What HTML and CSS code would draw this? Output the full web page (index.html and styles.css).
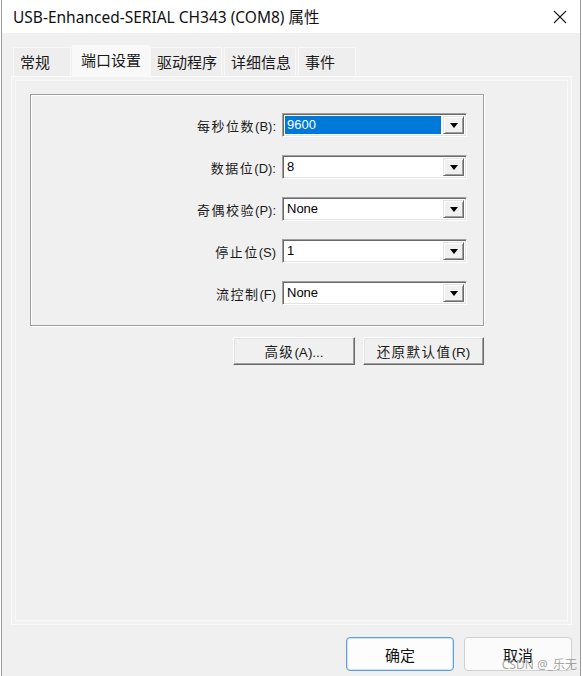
FILE: index.html
```html
<!DOCTYPE html>
<html>
<head>
  <meta charset="utf-8" />
  <title>USB-Enhanced-SERIAL CH343 (COM8) 属性</title>
  <link rel="stylesheet" href="styles.css">
</head>
<body>
  <div class="window">
    <div class="titlebar">
      <span class="title">USB-Enhanced-SERIAL CH343 (COM8) 属性</span>
      <svg class="close" width="14" height="14" viewBox="0 0 14 14">
        <path d="M1 1 L13 13 M13 1 L1 13" stroke="#1a1a1a" stroke-width="1.1" fill="none" />
      </svg>
    </div>
    <div class="content">
      <div class="tabs">
        <div class="tab">常规</div>
        <div class="tab active">端口设置</div>
        <div class="tab">驱动程序</div>
        <div class="tab">详细信息</div>
        <div class="tab">事件</div>
      </div>
      <div class="panel">
        <div class="group">
          <label class="label">每秒位数<span>(B):</span></label>
          <div class="combo"><span class="value selected">9600</span><span class="arrow"></span></div>
          <label class="label">数据位<span>(D):</span></label>
          <div class="combo"><span class="value">8</span><span class="arrow"></span></div>
          <label class="label">奇偶校验<span>(P):</span></label>
          <div class="combo"><span class="value">None</span><span class="arrow"></span></div>
          <label class="label">停止位<span>(S)</span></label>
          <div class="combo"><span class="value">1</span><span class="arrow"></span></div>
          <label class="label">流控制<span>(F)</span></label>
          <div class="combo"><span class="value">None</span><span class="arrow"></span></div>
        </div>
        <div class="actions">
          <button class="btn">高级<span>(A)...</span></button>
          <button class="btn wide">还原默认值<span>(R)</span></button>
        </div>
      </div>
      <div class="footer">
        <button class="dlg-btn primary">确定</button>
        <button class="dlg-btn">取消</button>
      </div>
    </div>
    <div class="watermark">CSDN @_乐无</div>
  </div>
</body>
</html>
```

FILE: styles.css
```css
:root {
  --face: #f0f0f0;
  --light: #ffffff;
  --shadow: #a0a0a0;
  --dark: #696969;
  --soft: #e3e3e3;
  --text: #1a1a1a;
}
body {
  margin: 0;
  background: #ffffff;
  font-family: "Liberation Sans", "Noto Sans CJK SC", sans-serif;
  color: var(--text);
}
.window {
  position: relative;
  box-sizing: border-box;
  width: 580px;
  height: 676px;
  margin-left: 1px;
  border-left: 1px solid #9c9c9c;
  border-right: 1px solid #9c9c9c;
  background: var(--face);
  overflow: hidden;
}

/* title bar */
.titlebar {
  height: 33px;
  background: #ffffff;
  display: flex;
  align-items: center;
  padding: 0 13px 0 11px;
}
.title {
  font-family: "Noto Sans", "Noto Sans CJK SC", sans-serif;
  font-size: 15.5px;
  color: #111;
}
.close {
  margin-left: auto;
}

.content {
  padding: 12px 8px 0 9px;
}

/* tabs */
.tabs {
  display: flex;
  align-items: flex-end;
  height: 31px;
  padding-left: 2px;
  font-family: "Noto Sans CJK SC", sans-serif;
  font-size: 15px;
}
.tab {
  box-sizing: border-box;
  min-width: 58px;
  height: 29px;
  line-height: 27px;
  padding: 0 4px 0 6px;
  margin-right: 2px;
  background: #eeeeee;
  border: 1px solid #f8f8f8;
  border-bottom: none;
  color: #1a1a1a;
}
.tab.active {
  height: 32px;
  line-height: 27px;
  padding: 0 8px;
  margin: 0 0 -1px -1px;
  background: #f9f9f9;
  border-color: #f9f9f9;
  position: relative;
  z-index: 1;
}

/* tab page */
.panel {
  box-sizing: border-box;
  height: 549px;
  border: 1px solid #fafafa;
  box-shadow: inset 0 0 0 3px #f2f2f2, inset 0 0 0 4px #f8f8f8;
}
.group {
  box-sizing: border-box;
  width: 454px;
  height: 232px;
  margin: 17px 0 0 18px;
  padding: 18px 16px 0 0;
  border: 1px solid var(--shadow);
  box-shadow: inset 1px 1px var(--light), 1px 1px var(--light);
  display: grid;
  grid-template-columns: 1fr 185px;
  grid-auto-rows: 24px;
  row-gap: 18px;
  column-gap: 6px;
  align-items: center;
}
.label {
  text-align: right;
  font-size: 13px;
  letter-spacing: 1.5px;
}
.label span, .btn span {
  letter-spacing: 0;
}
.combo {
  box-sizing: border-box;
  height: 24px;
  display: flex;
  padding: 2px;
  background: #ffffff;
  border: 1px solid;
  border-color: var(--shadow) var(--light) var(--light) var(--shadow);
  box-shadow: inset 1px 1px var(--dark), inset -1px -1px var(--soft);
}
.value {
  flex: 1;
  margin-right: 2px;
  padding-left: 2px;
  font-size: 13px;
  line-height: 18px;
  color: #000;
}
.value.selected {
  background: #0078d7;
  color: #ffffff;
}
.arrow {
  box-sizing: border-box;
  width: 21px;
  display: flex;
  align-items: center;
  justify-content: center;
  background: var(--face);
  border: 1px solid;
  border-color: var(--soft) var(--dark) var(--dark) var(--soft);
  box-shadow: inset 1px 1px var(--light), inset -1px -1px var(--shadow);
}
.arrow::after {
  content: "";
  border-left: 4px solid transparent;
  border-right: 4px solid transparent;
  border-top: 5px solid #000;
}

/* buttons under group */
.actions {
  width: 454px;
  margin: 11px 0 0 18px;
  display: flex;
  justify-content: flex-end;
  gap: 8px;
}
.btn {
  box-sizing: border-box;
  width: 122px;
  height: 28px;
  padding: 0;
  font-family: inherit;
  font-size: 13.5px;
  letter-spacing: 1.5px;
  color: var(--text);
  background: var(--face);
  border: 1px solid;
  border-color: var(--light) var(--dark) var(--dark) var(--light);
  box-shadow: inset -1px -1px var(--shadow), inset 1px 1px var(--soft);
}
.btn.wide {
  width: 121px;
}

/* dialog buttons */
.footer {
  display: flex;
  justify-content: flex-end;
  gap: 10px;
  margin-top: 12px;
}
.dlg-btn {
  box-sizing: border-box;
  width: 108px;
  height: 34px;
  font-family: "Noto Sans CJK SC", sans-serif;
  font-size: 15px;
  color: #111;
  background: #fbfbfb;
  border: 1px solid #d0d0d0;
  border-radius: 4px;
}
.dlg-btn.primary {
  background: #fdfdfd;
  border-color: #5b9fe0;
  box-shadow: inset 0 0 0 1px #cfe3f7;
}

.watermark {
  position: absolute;
  right: 3px;
  bottom: 3px;
  font-family: "Noto Sans", "Noto Sans CJK SC", sans-serif;
  font-size: 12px;
  color: rgba(150, 150, 150, 0.85);
}
```
